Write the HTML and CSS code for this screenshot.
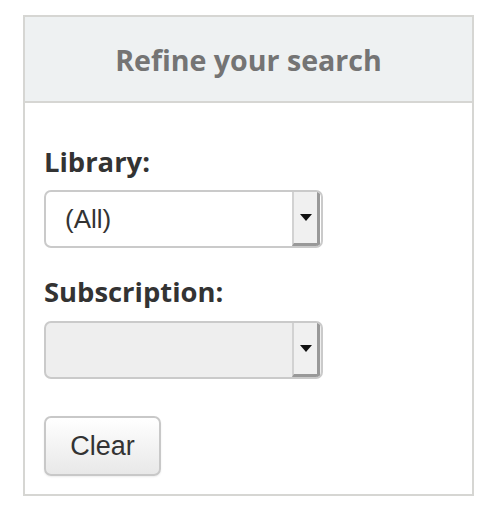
FILE: index.html
```html
<!DOCTYPE html>
<html>
<head>
<meta charset="utf-8">
<link rel="stylesheet" href="styles.css">
</head>
<body>
<div class="panel">
  <div class="panel-header"><h2 class="panel-title">Refine your search</h2></div>
  <div class="panel-body">
    <label class="field-label">Library:</label>
    <div class="select">
      <span class="select-value">(All)</span>
      <span class="select-btn"><svg width="12" height="7" viewBox="0 0 12 7"><path d="M0 0H12L6 7Z" fill="#111"/></svg></span>
    </div>
    <label class="field-label second">Subscription:</label>
    <div class="select disabled">
      <span class="select-value"></span>
      <span class="select-btn"><svg width="12" height="7" viewBox="0 0 12 7"><path d="M0 0H12L6 7Z" fill="#111"/></svg></span>
    </div>
    <button class="btn">Clear</button>
  </div>
</div>
</body>
</html>
```
FILE: styles.css
```css
html, body {
  margin: 0;
  padding: 0;
  background: #fff;
}
.panel {
  box-sizing: border-box;
  margin: 15px 0 0 23px;
  width: 451px;
  height: 481px;
  border: 2px solid #d6d6d3;
  display: flex;
  flex-direction: column;
}
.panel-header {
  height: 84px;
  background: #eef1f2;
  border-bottom: 2px solid #d6d6d3;
  display: flex;
  align-items: center;
  justify-content: center;
}
.panel-title {
  margin: 0;
  font-family: "Open Sans", sans-serif;
  font-weight: 700;
  font-size: 28.6px;
  color: #747474;
  padding-top: 1px;
}
.panel-body {
  padding: 41px 19px 18px 19px;
  display: flex;
  flex-direction: column;
  align-items: flex-start;
}
.field-label {
  font-family: "Open Sans", sans-serif;
  font-weight: 700;
  font-size: 27.4px;
  line-height: 35px;
  color: #333;
  margin-bottom: 11px;
}
.field-label.second {
  margin-top: 26px;
  margin-bottom: 12px;
}
.select {
  box-sizing: border-box;
  width: 279px;
  height: 58px;
  border: 2px solid #cacaca;
  border-radius: 7px;
  background: #fff;
  display: flex;
  overflow: hidden;
}
.select.disabled {
  background: #eeeeee;
}
.select-value {
  flex: 1;
  font-family: "Liberation Sans", Arial, sans-serif;
  font-size: 26px;
  color: #333;
  padding-left: 19px;
  display: flex;
  align-items: center;
}
.select-btn {
  box-sizing: border-box;
  width: 28px;
  margin-right: 1px;
  background: #f0f0f0;
  border-left: 2px solid #d2d2d2;
  border-right: 3px solid #999;
  border-bottom: 3px solid #999;
  display: flex;
  align-items: center;
  justify-content: center;
  padding-left: 1px;
}
.btn {
  margin-top: 37px;
  box-sizing: border-box;
  width: 117px;
  height: 60px;
  border: 2px solid #c8c8c8;
  border-radius: 7px;
  background: linear-gradient(#ffffff, #e8e8e8);
  box-shadow: 0 1px 2px rgba(0,0,0,0.08);
  font-family: "Liberation Sans", Arial, sans-serif;
  font-size: 27px;
  color: #333;
  padding: 0;
}
```
